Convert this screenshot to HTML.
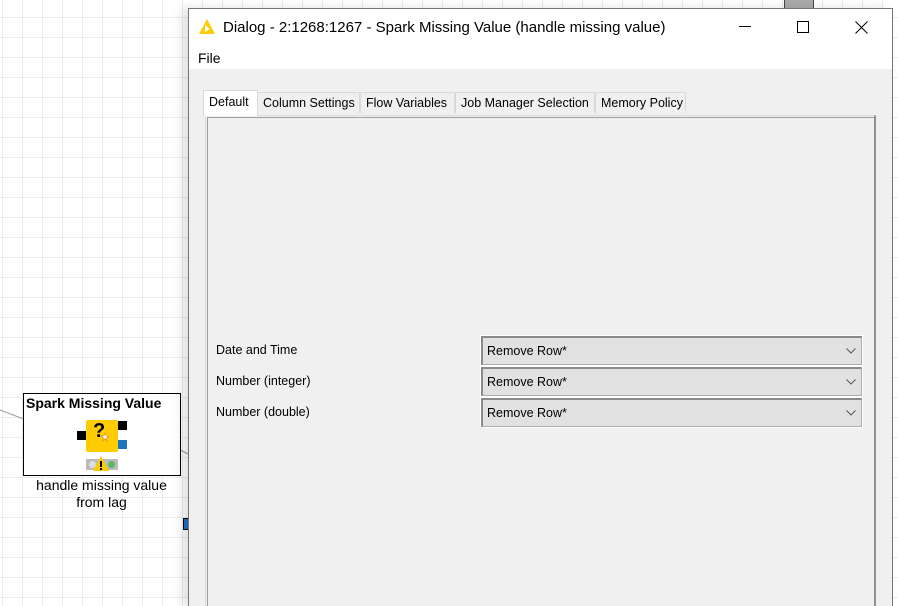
<!DOCTYPE html>
<html style="width:898px;height:606px;overflow:hidden"><head><meta charset="utf-8"><style>
*{margin:0;padding:0;box-sizing:border-box}
body{width:898px;height:606px;overflow:hidden;position:relative;font-family:"Liberation Sans",sans-serif;font-size:12px;color:#000;
background-color:#fff;
background-image:linear-gradient(#ececec 1px,transparent 1px),linear-gradient(90deg,#ececec 1px,transparent 1px);
background-size:20px 20px;background-position:0 17px,2px 0}
.abs{position:absolute}
.dlg{left:188px;top:8px;width:705px;height:598px;background:#f0f0f0;border:1px solid #777;border-bottom:none;box-shadow:-6px 0 10px rgba(0,0,0,0.12)}
.combo{position:absolute;left:481px;width:381px;height:29px;background:#e1e1e1;border:1px solid #adadad;border-top:2px solid #8a8a8a;border-left:2px solid #8a8a8a;box-shadow:0 0 0 1px #fff}
.combo span{position:absolute;left:4px;top:6px;font-size:12.5px}
.combo svg{position:absolute;right:5px;top:10px}
.lbl{position:absolute;left:216px;font-size:12.5px}
.tab{position:absolute;top:92px;height:21px;border:1px solid #d9d9d9;border-bottom:none;background:#f0f0f0;font-size:12.5px;padding:3px 0 0 5px;white-space:nowrap;overflow:hidden}
</style></head><body>
<div class="abs" style="left:784px;top:0;width:30px;height:9px;background:#aaa;border:1px solid #444;border-top:none"></div>
<svg class="abs" style="left:0;top:380px" width="200" height="80">
<polyline points="0,30 68,56 76,56" fill="none" stroke="#999" stroke-width="1"/>
<polyline points="126,46 136,46 188,74" fill="none" stroke="#999" stroke-width="1"/>
</svg>
<div class="abs" style="left:23px;top:393px;width:158px;height:83px;border:1px solid #000;background:#fff"></div>
<div class="abs" style="left:26px;top:395px;font-weight:bold;font-size:14px">Spark Missing Value</div>
<div class="abs" style="left:77px;top:431px;width:9px;height:9px;background:#000"></div>
<div class="abs" style="left:86px;top:420px;width:32px;height:32px;background:#fecc00;border-radius:2px"></div>
<div class="abs" style="left:93px;top:420px;font-size:20px;font-weight:bold">?</div>
<svg class="abs" style="left:100px;top:432px" width="10" height="10"><polygon points="5,0 6.5,3.5 10,4 7,6.5 8,10 5,8 2,10 3,6.5 0,4 3.5,3.5" fill="#f39a2b"/><circle cx="5" cy="5" r="1.8" fill="#fff"/></svg>
<div class="abs" style="left:118px;top:421px;width:9px;height:9px;background:#000"></div>
<div class="abs" style="left:118px;top:440px;width:9px;height:9px;background:#1e73be"></div>
<div class="abs" style="left:86px;top:459px;width:32px;height:11px;background:#bbb;border-radius:1px"></div>
<div class="abs" style="left:89px;top:461px;width:7px;height:7px;background:#ddd;border-radius:50%"></div>
<div class="abs" style="left:108px;top:461px;width:7px;height:7px;background:#5cb85c;border-radius:50%"></div>
<svg class="abs" style="left:93px;top:456px" width="16" height="16"><polygon points="8,0 16,15 0,15" fill="#fecc00"/><rect x="7" y="5" width="2" height="6" fill="#000"/><rect x="7" y="12" width="2" height="2" fill="#000"/></svg>
<div class="abs" style="left:0;top:477px;width:203px;text-align:center;font-size:14px;line-height:17px">handle missing value<br>from lag</div>
<div class="abs" style="left:183px;top:518px;width:6px;height:12px;border:1px solid #000;border-right:none;background:#1e73be"></div>

<div class="abs dlg"></div>
<div class="abs" style="left:189px;top:9px;width:703px;height:60px;background:#fff"></div>
<svg class="abs" style="left:198px;top:18px" width="18" height="18"><polygon points="9,1 17,16 1,16" fill="#fecc00"/><polygon points="7,7 12,11 7,14" fill="#fff"/></svg>
<div class="abs" style="left:223px;top:19px;font-size:15px">Dialog - 2:1268:1267 - Spark Missing Value (handle missing value)</div>
<div class="abs" style="left:739px;top:26px;width:12px;height:1px;background:#000"></div>
<div class="abs" style="left:797px;top:21px;width:12px;height:12px;border:1px solid #000"></div>
<svg class="abs" style="left:855px;top:21px" width="13" height="13"><path d="M0.5 0.5L12.5 12.5M12.5 0.5L0.5 12.5" stroke="#000" stroke-width="1"/></svg>
<div class="abs" style="left:198px;top:50px;font-size:14px">File</div>

<div class="tab" style="left:257px;width:103px">Column Settings</div>
<div class="tab" style="left:360px;width:95px">Flow Variables</div>
<div class="tab" style="left:455px;width:140px">Job Manager Selection</div>
<div class="tab" style="left:595px;width:91px">Memory Policy</div>
<div class="abs" style="left:205px;top:115px;width:671px;height:491px;border:1px solid #d9d9d9;border-right:2px solid #8a9099;border-bottom:none;background:#f0f0f0">
<div style="position:absolute;left:1px;top:1px;right:0;bottom:0;border-left:1px solid #9aa0a8;border-top:1px solid #9aa0a8"></div></div>
<div class="tab" style="left:203px;top:90px;width:55px;height:26px;background:#fff;border-color:#d9d9d9;padding-top:4px">Default</div>

<div class="lbl" style="top:343px">Date and Time</div>
<div class="lbl" style="top:374px">Number (integer)</div>
<div class="lbl" style="top:405px">Number (double)</div>
<div class="combo" style="top:336px"><span>Remove Row*</span><svg width="10" height="6"><path d="M0.5 0.5L5 5L9.5 0.5" fill="none" stroke="#555"/></svg></div>
<div class="combo" style="top:367px"><span>Remove Row*</span><svg width="10" height="6"><path d="M0.5 0.5L5 5L9.5 0.5" fill="none" stroke="#555"/></svg></div>
<div class="combo" style="top:398px"><span>Remove Row*</span><svg width="10" height="6"><path d="M0.5 0.5L5 5L9.5 0.5" fill="none" stroke="#555"/></svg></div>
</body></html>
